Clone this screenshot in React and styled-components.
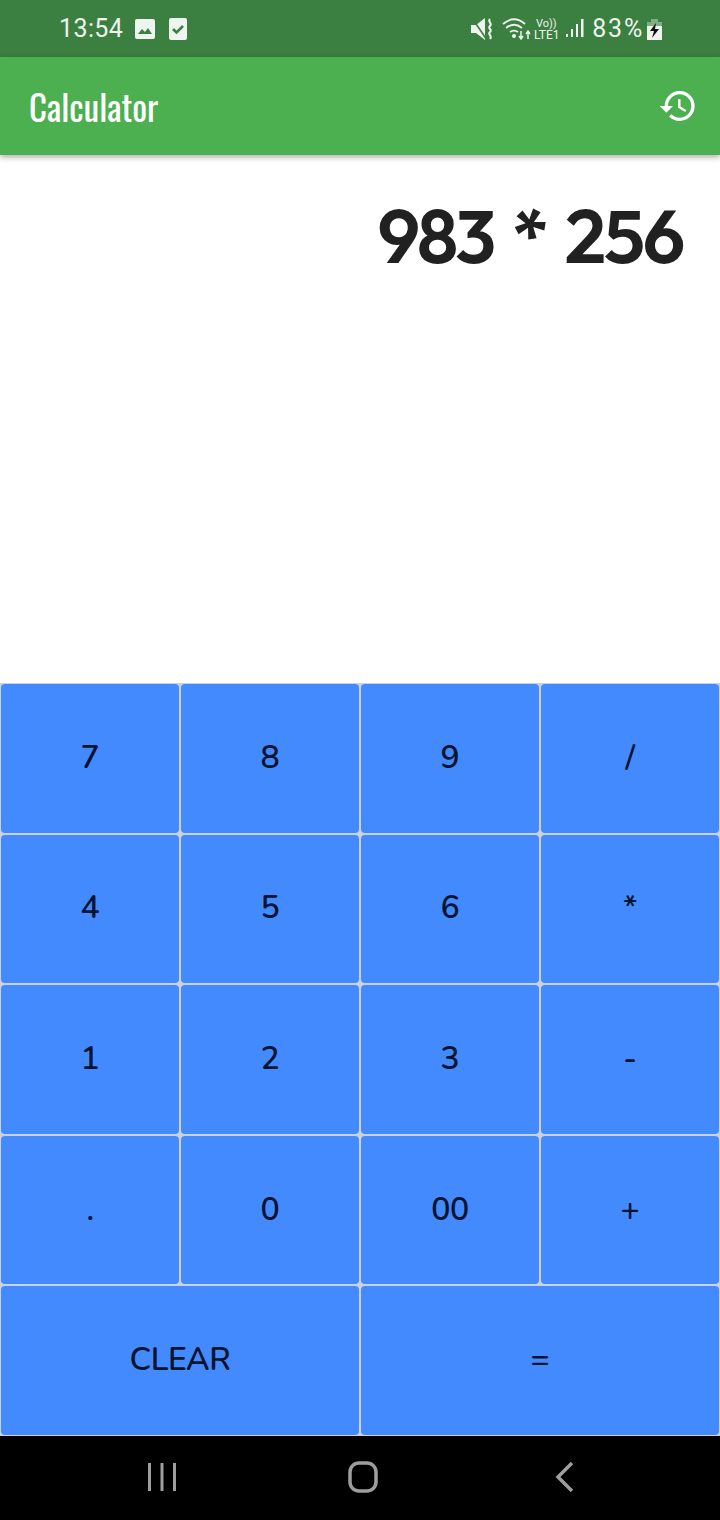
import styled, { createGlobalStyle } from 'styled-components';

const GlobalStyle = createGlobalStyle`
  html, body {
    margin: 0;
    padding: 0;
    background: #fff;
  }
`;

const Page = styled.div`
  width: 720px;
  height: 1520px;
  display: flex;
  flex-direction: column;
  overflow: hidden;
  font-family: 'Roboto', sans-serif;
`;

const StatusBar = styled.div`
  height: 57px;
  flex: none;
  display: flex;
  align-items: center;
  justify-content: space-between;
  padding: 0 58px 0 59px;
  background: #3b8040;
  color: #eef4ee;
`;

const StatusGroup = styled.div`
  display: flex;
  align-items: center;
  gap: ${(p) => p.$gap || 0}px;
`;

const StatusText = styled.span`
  margin-left: ${(p) => p.$left || 0}px;
  font-family: 'Roboto', sans-serif;
  font-size: 25px;
  letter-spacing: ${(p) => p.$spacing || 0.4}px;
  line-height: 57px;
`;

const StatusIcon = styled.svg`
  flex: none;
  margin-left: ${(p) => p.$left || 0}px;
`;

const AppBar = styled.header`
  position: relative;
  z-index: 1;
  height: 98px;
  flex: none;
  display: flex;
  align-items: center;
  justify-content: space-between;
  padding: 0 22px 0 29px;
  background: #4caf50;
  box-shadow: 0 2px 6px rgba(0, 0, 0, 0.35);
`;

const Title = styled.h1`
  margin: 0;
  font-family: 'Oswald', 'Roboto', sans-serif;
  font-size: 35px;
  font-weight: 400;
  color: #fff;
`;

const Display = styled.div`
  flex: 1;
  padding: 36px 37px 0 0;
  text-align: right;
  font-family: 'Outfit', 'Lato', sans-serif;
  font-size: 75px;
  font-weight: 600;
  line-height: 90px;
  letter-spacing: -2.4px;
  word-spacing: 6px;
  color: #212121;
`;

const Keypad = styled.div`
  flex: none;
  height: 753px;
  display: grid;
  grid-template-columns: repeat(4, 1fr);
  grid-template-rows: repeat(5, 1fr);
  background: #c9d2de;
`;

const Key = styled.button`
  grid-column: span ${(p) => p.$span || 1};
  margin: 1px;
  padding: 0 0 2px;
  border: none;
  border-radius: 4px;
  background: #448aff;
  color: #06142f;
  font-family: 'Nunito', 'Open Sans', sans-serif;
  font-size: 32px;
  font-weight: 600;
  letter-spacing: -0.4px;
`;

const NavBar = styled.nav`
  height: 84px;
  flex: none;
  display: flex;
  align-items: center;
  gap: 172px;
  padding: 0 0 2px 146px;
  box-sizing: border-box;
  background: #000;
`;

const rows = ['7', '8', '9', '/', '4', '5', '6', '*', '1', '2', '3', '-', '.', '0', '00', '+'];

function StatusLeftIcons() {
  return (
    <StatusGroup $gap={14}>
      <svg width="20" height="20" viewBox="0 0 20 20">
        <rect width="20" height="20" rx="2" fill="#eef4ee" />
        <path d="M3 15l4-5 3 3 3-4 4 6z" fill="#3b8040" />
      </svg>
      <svg width="18" height="22" viewBox="0 0 18 22">
        <rect width="18" height="22" rx="2" fill="#eef4ee" />
        <path d="M4 11l3.5 3.5L14 8" fill="none" stroke="#3b8040" strokeWidth="2.6" />
      </svg>
    </StatusGroup>
  );
}

function StatusRightIcons() {
  return (
    <StatusGroup>
      <StatusIcon width="22" height="24" viewBox="0 0 22 24" fill="none">
        <path d="M0 8h5l9-7v22l-9-7H0z" fill="#eef4ee" />
        <path d="M1 1l15 22" stroke="#3b8040" strokeWidth="1.6" />
        <path d="M19 2c-3 3 3 4 0 7s3 3 0 6 3 3 0 7" stroke="#eef4ee" strokeWidth="2" />
      </StatusIcon>
      <StatusIcon $left={9} width="29" height="24" viewBox="0 0 29 24" fill="none">
        <path d="M1 7c7-6 15-6 22 0M4 11c5-4 11-4 16 0M8 15c3-2 5-2 8 0" stroke="#eef4ee" strokeWidth="1.8" />
        <circle cx="12" cy="19" r="2" fill="#eef4ee" />
        <path d="M19 14v8m-2-3l2 3 2-3M26 22v-8m-2 3l2-3 2 3" stroke="#eef4ee" strokeWidth="1.5" />
      </StatusIcon>
      <StatusIcon $left={3} width="27" height="24" viewBox="0 0 27 24" fill="#eef4ee" fontFamily="Roboto, sans-serif">
        <text x="2" y="10" fontSize="11">Vo))</text>
        <text x="0" y="22" fontSize="12">LTE1</text>
      </StatusIcon>
      <StatusIcon $left={5} width="18" height="24" viewBox="0 0 18 24" fill="#eef4ee">
        <rect x="0" y="17" width="2" height="3" />
        <rect x="5" y="12" width="2" height="8" />
        <rect x="10" y="7" width="2" height="13" />
        <rect x="15" y="2" width="2.5" height="18" />
      </StatusIcon>
      <StatusText $left={8} $spacing={1.8}>83%</StatusText>
      <StatusIcon $left={3} width="15" height="24" viewBox="0 0 15 24">
        <path d="M4 2h7v3H4z" fill="#7fae82" />
        <rect y="5" width="15" height="8" fill="#7fae82" />
        <rect y="9" width="15" height="14" fill="#eef4ee" />
        <path d="M9 6L3 14h4l-2 7 7-9H8z" fill="#111" />
      </StatusIcon>
    </StatusGroup>
  );
}

export default function App() {
  return (
    <>
      <GlobalStyle />
      <Page>
        <StatusBar>
          <StatusGroup $gap={12}>
            <StatusText>13:54</StatusText>
            <StatusLeftIcons />
          </StatusGroup>
          <StatusRightIcons />
        </StatusBar>
        <AppBar>
          <Title>Calculator</Title>
          <svg width="40" height="40" viewBox="0 0 24 24" fill="#fff">
            <path d="M13 3a9 9 0 0 0-9 9H1l3.89 3.89.07.14L9 12H6c0-3.87 3.13-7 7-7s7 3.13 7 7-3.13 7-7 7c-1.93 0-3.68-.79-4.94-2.06l-1.42 1.42A8.954 8.954 0 0 0 13 21a9 9 0 0 0 0-18zm-1 5v5l4.28 2.54.72-1.21-3.5-2.08V8H12z" />
          </svg>
        </AppBar>
        <Display>983 * 256</Display>
        <Keypad>
          {rows.map((label) => (
            <Key key={label}>{label}</Key>
          ))}
          <Key $span={2}>CLEAR</Key>
          <Key $span={2}>=</Key>
        </Keypad>
        <NavBar>
          <svg width="30" height="30" viewBox="0 0 30 30" stroke="#9e9e9e" strokeWidth="3">
            <path d="M3.5 1v28M16 1v28M28.5 1v28" />
          </svg>
          <svg width="30" height="32" viewBox="0 0 30 32" fill="none" stroke="#9e9e9e" strokeWidth="3.5">
            <rect x="2" y="2" width="26" height="28" rx="9" />
          </svg>
          <svg width="24" height="32" viewBox="0 0 24 32" fill="none" stroke="#9e9e9e" strokeWidth="3.5">
            <path d="M22 2L8 16l14 14" />
          </svg>
        </NavBar>
      </Page>
    </>
  );
}
